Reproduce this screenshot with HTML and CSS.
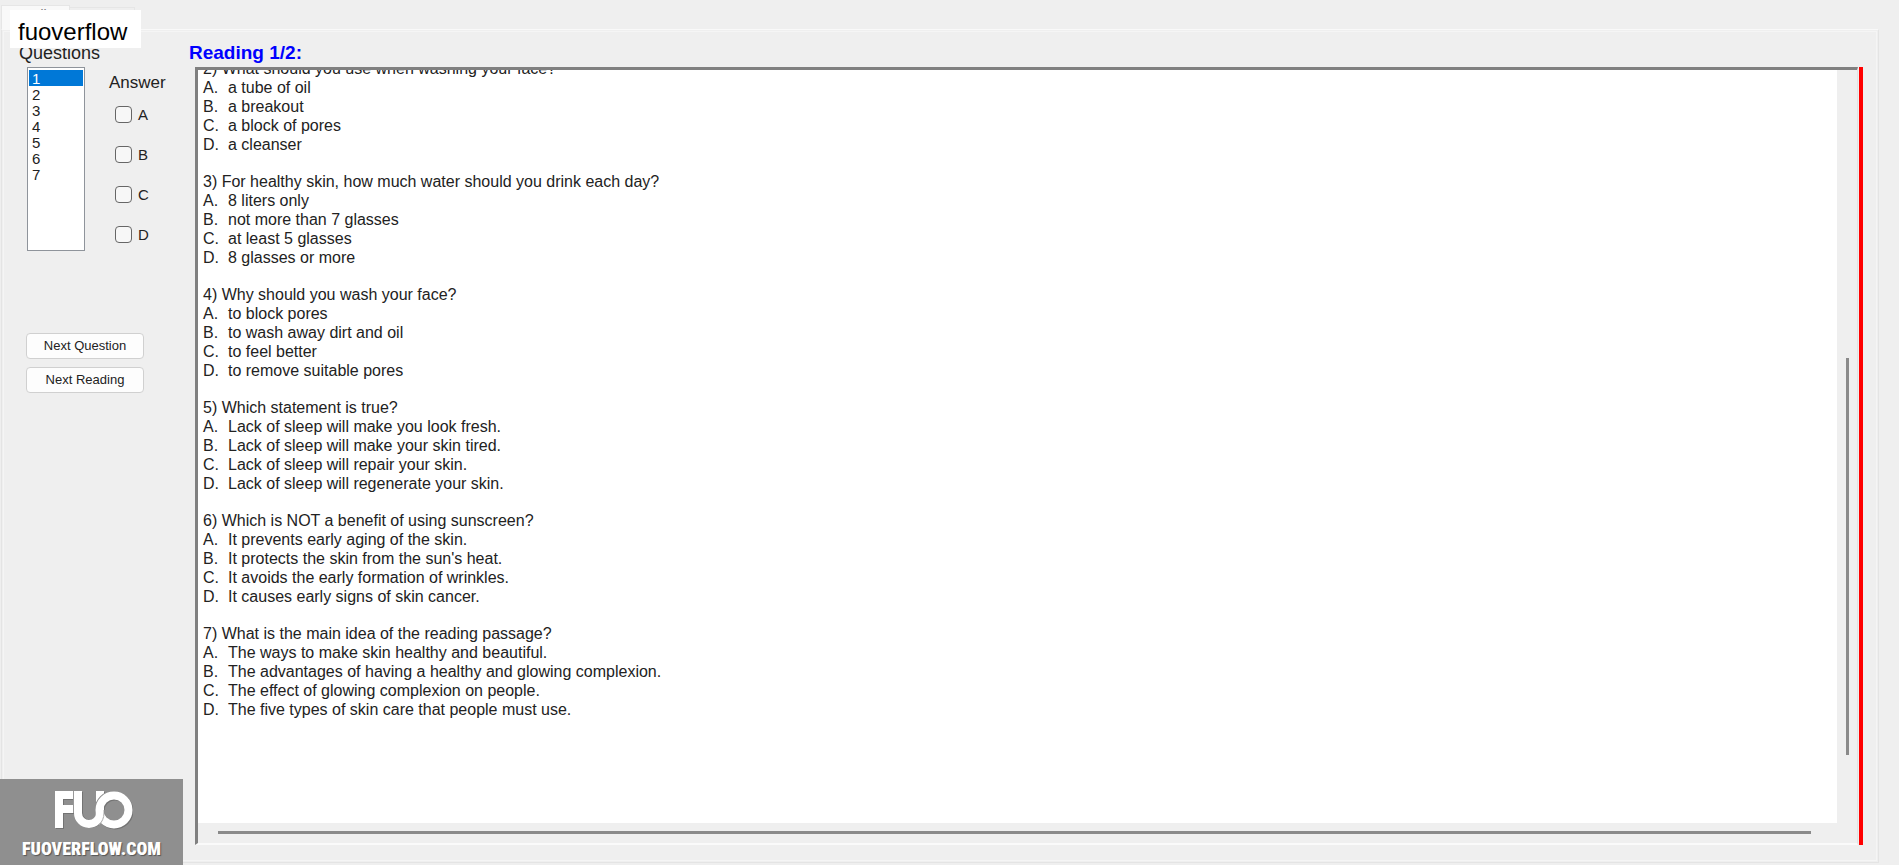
FILE: index.html
```
<!DOCTYPE html>
<html lang="en">
<head>
<meta charset="utf-8">
<title>Reading</title>
<link rel="stylesheet" href="styles.css">
</head>
<body>
<div class="tabs"><div class="tab tab-active">Reading</div><div class="tab"></div></div>
<main class="panel">
  <aside class="side">
    <label class="heading" for="questions">Questions</label>
    <div class="picker">
      <select id="questions" class="list" size="7">
        <option selected>1</option><option>2</option><option>3</option><option>4</option><option>5</option><option>6</option><option>7</option>
      </select>
      <fieldset class="answers">
        <legend class="legend">Answer</legend>
        <label class="answer"><input type="checkbox">A</label>
        <label class="answer"><input type="checkbox">B</label>
        <label class="answer"><input type="checkbox">C</label>
        <label class="answer"><input type="checkbox">D</label>
      </fieldset>
    </div>
    <div class="actions">
      <button type="button">Next Question</button>
      <button type="button">Next Reading</button>
    </div>
  </aside>
  <section class="reading">
    <h1 class="title">Reading 1/2:</h1>
    <div class="viewer">
      <div class="frame">
        <div class="page">
          <div class="question"><p>2) What should you use when washing your face?</p><p><b>A.</b>a tube of oil</p><p><b>B.</b>a breakout</p><p><b>C.</b>a block of pores</p><p><b>D.</b>a cleanser</p></div>
          <div class="question"><p>3) For healthy skin, how much water should you drink each day?</p><p><b>A.</b>8 liters only</p><p><b>B.</b>not more than 7 glasses</p><p><b>C.</b>at least 5 glasses</p><p><b>D.</b>8 glasses or more</p></div>
          <div class="question"><p>4) Why should you wash your face?</p><p><b>A.</b>to block pores</p><p><b>B.</b>to wash away dirt and oil</p><p><b>C.</b>to feel better</p><p><b>D.</b>to remove suitable pores</p></div>
          <div class="question"><p>5) Which statement is true?</p><p><b>A.</b>Lack of sleep will make you look fresh.</p><p><b>B.</b>Lack of sleep will make your skin tired.</p><p><b>C.</b>Lack of sleep will repair your skin.</p><p><b>D.</b>Lack of sleep will regenerate your skin.</p></div>
          <div class="question"><p>6) Which is NOT a benefit of using sunscreen?</p><p><b>A.</b>It prevents early aging of the skin.</p><p><b>B.</b>It protects the skin from the sun's heat.</p><p><b>C.</b>It avoids the early formation of wrinkles.</p><p><b>D.</b>It causes early signs of skin cancer.</p></div>
          <div class="question"><p>7) What is the main idea of the reading passage?</p><p><b>A.</b>The ways to make skin healthy and beautiful.</p><p><b>B.</b>The advantages of having a healthy and glowing complexion.</p><p><b>C.</b>The effect of glowing complexion on people.</p><p><b>D.</b>The five types of skin care that people must use.</p></div>
        </div>
        <div class="vbar"><div class="vthumb"></div></div>
        <div class="hbar"></div>
      </div>
      <div class="marker"></div>
    </div>
  </section>
</main>
<div class="badge">fuoverflow</div>
<div class="brand">
  <svg class="logo" viewBox="0 0 82 40" width="82" height="40" aria-hidden="true">
    <g transform="translate(1 1)" fill="none" stroke="#737373" stroke-width="8">
      <path d="M8 38V5H26M8 19H22"/><path d="M27 1V22a11 11 0 0 0 22 0V1"/><circle cx="63" cy="20" r="14.5"/>
    </g>
    <path d="M8 38V5H26M8 19H22" fill="none" stroke="#fff" stroke-width="8"/>
    <path d="M27 1V23a11 11 0 0 0 22 0V1" fill="none" stroke="#fff" stroke-width="8"/>
    <path d="M22.500 1V23" stroke="#999" stroke-width="1"/>
    <path d="M44.500 20A18.500 18.500 0 0 1 63 1.500" fill="none" stroke="#8f8f8f" stroke-width="2"/>
    <circle cx="63" cy="20" r="14.500" fill="none" stroke="#fff" stroke-width="8"/>
    <path d="M53 20v3c0 5-2 9-5 12" fill="none" stroke="#aaa" stroke-width="1"/>
  </svg>
  <span>FUOVERFLOW.COM</span>
</div>
</body>
</html>
```
FILE: styles.css
```
* { box-sizing: border-box; }
body {
  margin: 0;
  height: 100vh;
  display: flex;
  flex-direction: column;
  padding: 5px 20px 2px 1px;
  background: #efefef;
  color: #222;
  font: 16px/19px "Liberation Sans", Arial, sans-serif;
  overflow: hidden;
  position: relative;
}
.tabs { display: flex; align-items: flex-end; height: 24px; }
.tab { width: 65px; height: 22px; border: 1px solid #e6e6e6; border-width: 1px 1px 0 0; }
.tab-active { width: 69px; height: 24px; padding-left: 8px; background: #f9f9f9; border-width: 1px; border-bottom: 0; color: #777; font-size: 14px; line-height: 18px; }
.panel {
  flex: 1;
  min-height: 0;
  display: flex;
  border: 1px solid #e4e4e4;
  border-top-color: #f9f9f9;
  outline: 1px solid #f5f5f5;
  outline-offset: -3px;
  padding: 14px 15px 17px 0;
}
.side { width: 187px; flex: none; padding-left: 17px; }
.heading { display: block; font-size: 18px; line-height: 18px; }
.legend { padding: 0; font-size: 17px; line-height: 20px; }
.picker { display: flex; margin: 5px 0 0 8px; gap: 24px; }
.list {
  width: 58px;
  height: 184px;
  flex: none;
  border: 1px solid #8f949b;
  border-radius: 0;
  background: #fff;
  padding: 2px 1px;
  font: 15px/16px "Liberation Sans", Arial, sans-serif;
  color: #222;
  overflow: hidden;
  outline: 0;
}
.list option { padding: 0 3px; height: 16px; min-height: 16px; line-height: 16px; }
.list option:checked { background: #0078d7 linear-gradient(#0078d7, #0078d7); color: #fff; -webkit-text-fill-color: #fff; }
.answers { border: 0; margin: 6px 0 0; padding: 0; min-width: 0; }
.answer { display: flex; align-items: center; gap: 6px; height: 16px; margin: 0 0 24px 6px; font-size: 15px; }
.legend + .answer { margin-top: 13px; }
.answer:last-child { margin-bottom: 0; }
.answer input {
  appearance: none;
  width: 17px;
  height: 17px;
  flex: none;
  margin: 0;
  border: 1px solid #666;
  border-radius: 4px;
  background: #f7f7f7;
}
.actions { display: flex; flex-direction: column; gap: 8px; margin: 82px 0 0 7px; width: 118px; }
.actions button {
  height: 26px;
  padding: 0;
  border: 1px solid #d0d0d0;
  border-radius: 4px;
  background: #fdfdfd;
  color: #222;
  font: 13px/16px "Liberation Sans", Arial, sans-serif;
}
.reading { flex: 1; min-width: 0; display: flex; flex-direction: column; }
.title { margin: 0; color: #00f; font-size: 19px; line-height: 18px; }
.viewer { flex: 1; min-height: 0; display: flex; margin: 5px 0 0 6px; }
.frame {
  flex: 1;
  min-width: 0;
  display: grid;
  grid-template: minmax(0, 1fr) 20px / minmax(0, 1fr) 20px;
  border: 1px solid #e2e2e2;
  border-top: 3px solid #808080;
  border-left: 3px solid #808080;
  border-bottom: 2px solid #fafafa;
}
.page {
  background: #fff;
  overflow: hidden;
  display: flex;
  flex-direction: column;
  justify-content: flex-end;
  gap: 18px;
  padding: 0 5px 104px;
}
.question { flex: none; }
.question p { margin: 0; }
.question b { display: inline-block; width: 25px; font-weight: 400; }
.vbar { display: flex; flex-direction: column; align-items: center; padding: 288px 0 68px; }
.vthumb { width: 3px; flex: 1; background: #8a8a8a; }
.hbar { height: 3px; margin: 8px 26px 0 20px; background: #8a8a8a; }
.marker { width: 4px; margin-left: 1px; background: #f00; }
.badge {
  position: absolute;
  left: 10px;
  top: 10px;
  padding: 8px 14px 2px 8px;
  background: #fff;
  color: #000;
  font-size: 24px;
  line-height: 28px;
}
.brand {
  position: absolute;
  left: 0;
  bottom: 0;
  width: 183px;
  height: 86px;
  padding-top: 11px;
  display: flex;
  flex-direction: column;
  align-items: center;
  gap: 8px;
  background: #8f8f8f;
  color: #fff;
  font: 900 18px/22px Impact, "Roboto Condensed", Roboto, sans-serif;
  text-shadow: 1px 1px 1px #555;
}
.logo { flex: none; }
```
